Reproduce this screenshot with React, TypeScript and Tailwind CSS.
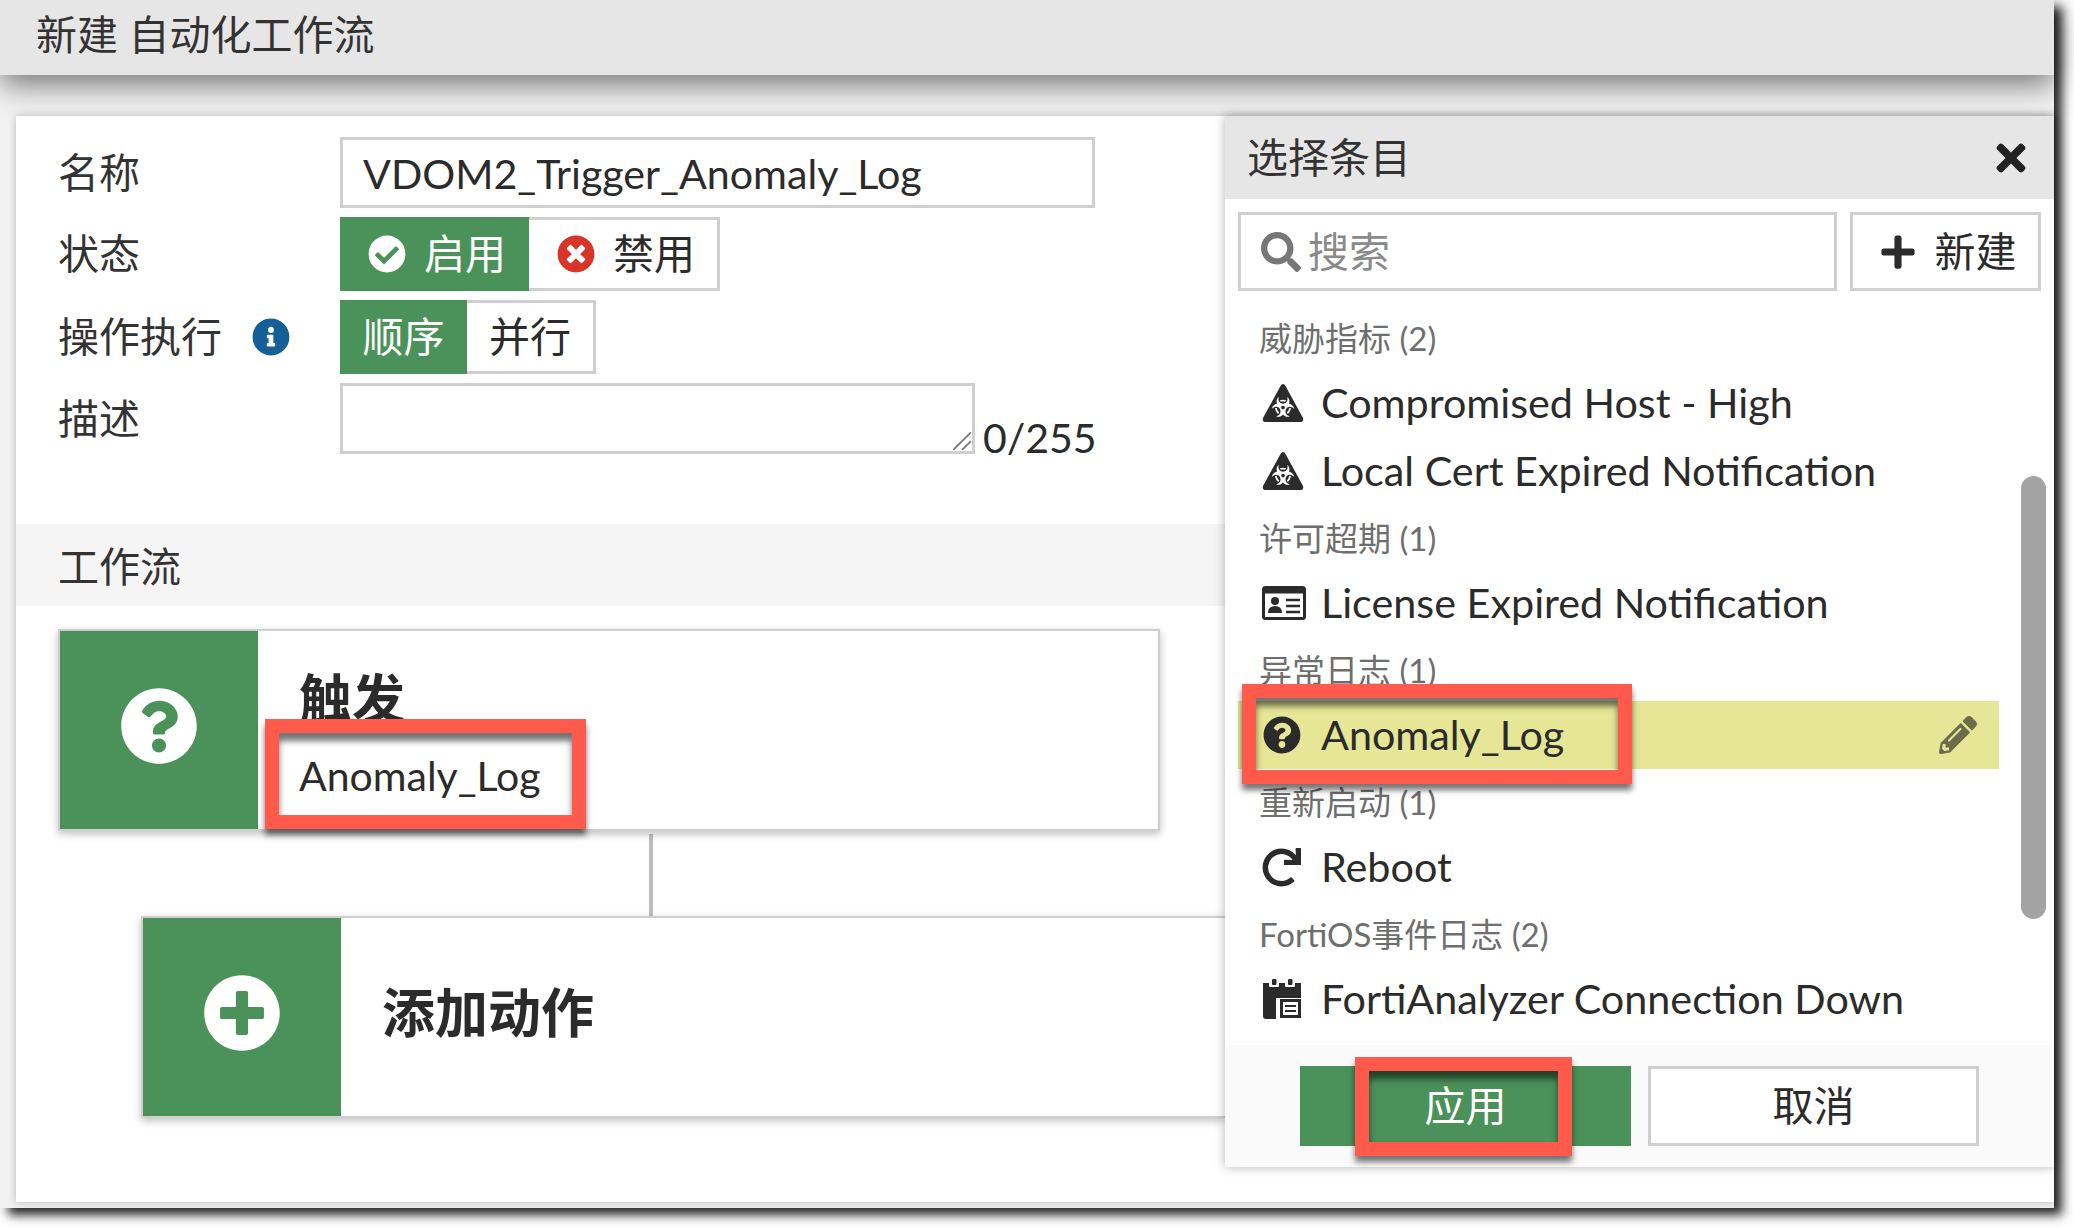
import React from "react";
import {
  FaCheckCircle,
  FaTimesCircle,
  FaInfoCircle,
  FaQuestionCircle,
  FaPlusCircle,
  FaSearch,
  FaPlus,
  FaTimes,
  FaRedo,
  FaPencilAlt,
  FaBiohazard,
} from "react-icons/fa";

const font = "font-['Lato','Noto_Sans_CJK_SC',sans-serif]";

function Hazard() {
  return (
    <span className="relative w-[42px] h-[40px] block">
      <svg viewBox="0 0 42 40" className="w-[42px] h-[40px]">
        <path d="M21 1 Q22.5 1 23.5 3 L41 35 Q42 39 38 39 L4 39 Q0 39 1 35 L18.5 3 Q19.5 1 21 1 Z" fill="#2b2b2b" />
      </svg>
      <FaBiohazard className="absolute left-[10px] top-[13px] text-[22px] text-white" />
    </span>
  );
}

function IdCard() {
  return (
    <svg viewBox="0 0 44 34" className="w-[44px] h-[34px]">
      <rect x="1.5" y="1.5" width="41" height="31" rx="2" fill="#fff" stroke="#2b2b2b" strokeWidth="3" />
      <rect x="1.5" y="1.5" width="41" height="6" fill="#2b2b2b" />
      <circle cx="13" cy="15" r="4" fill="#2b2b2b" />
      <path d="M6 27 q0 -7 7 -7 q7 0 7 7 Z" fill="#2b2b2b" />
      <path d="M24 14 H38 M24 20 H38 M24 26 H38" stroke="#2b2b2b" strokeWidth="2.4" />
    </svg>
  );
}

function Calendar() {
  return (
    <svg viewBox="0 0 40 40" className="w-[40px] h-[40px]">
      <path d="M1 4 H39 V19 H14 V40 H4 Q1 40 1 37 Z" fill="#2b2b2b" />
      <rect x="7" y="1" width="10" height="7" rx="1" fill="#fff" />
      <rect x="23" y="1" width="10" height="7" rx="1" fill="#fff" />
      <rect x="10" y="0" width="4.5" height="6" rx="1" fill="#2b2b2b" />
      <rect x="26" y="0" width="4.5" height="6" rx="1" fill="#2b2b2b" />
      <rect x="18" y="20" width="21" height="19" fill="#2b2b2b" />
      <rect x="21" y="23" width="15" height="13" fill="#fff" />
      <path d="M23 27 H34 M23 32 H34" stroke="#2b2b2b" strokeWidth="2" />
    </svg>
  );
}

function Group({ children }: { children: React.ReactNode }) {
  return <div className="h-[64px] pt-[4px] flex items-center pl-[34px] text-[33px] text-[#6e6e6e]">{children}</div>;
}

function Item({ icon, children }: { icon: React.ReactNode; children: React.ReactNode }) {
  return (
    <div className="h-[68px] flex items-center pl-[34px] text-[41.3px] text-[#2b2b2b]">
      <span className="w-[62px] pl-[3px] flex items-center">{icon}</span>
      {children}
    </div>
  );
}

function Callout({ className }: { className: string }) {
  return (
    <div className={`absolute border-[14px] border-[#ff5a4b] shadow-[0_6px_6px_rgba(0,0,0,0.55),inset_0_8px_6px_rgba(0,0,0,0.55)] ${className}`} />
  );
}

function Row({ label, children, className }: { label: React.ReactNode; children: React.ReactNode; className?: string }) {
  return (
    <div className={`flex items-center ${className ?? ""}`}>
      <div className="w-[324px] pl-[42px] flex items-center text-[41px] text-[#333]">{label}</div>
      {children}
    </div>
  );
}

export default function App() {
  return (
    <div className={`${font} w-[2074px] h-[1228px] bg-white overflow-hidden`}>
      <div className="w-[2054px] h-[1208px] bg-[#f2f2f2] shadow-[8px_7px_10px_rgba(0,0,0,0.85)] flex flex-col">
        <div className="h-[75px] shrink-0 bg-[#e6e6e6] flex items-center pl-[36px] text-[41px] text-[#333] shadow-[0_10px_30px_rgba(0,0,0,0.5)] pb-[6px]">
          新建 自动化工作流
        </div>
        <div className="mt-[41px] ml-[16px] h-[1086px] bg-white shadow-[0_0_8px_rgba(0,0,0,0.25)] flex items-start">
          <div className="w-[1209px] shrink-0 flex flex-col">
            <div className="pt-[21px] flex flex-col gap-[9px]">
              <Row label="名称">
                <div className="w-[755px] h-[71px] border-[3px] border-[#cfcfcf] flex items-center pl-[20px] pt-[2px] text-[41.2px] text-[#2b2b2b]">
                  VDOM2_Trigger_Anomaly_Log
                </div>
              </Row>
              <Row label="状态">
                <div className="flex h-[74px] text-[41px]">
                  <div className="w-[189px] bg-[#4a9259] text-white flex items-center pl-[28px] gap-[18px]">
                    <FaCheckCircle className="text-[38px]" />
                    启用
                  </div>
                  <div className="w-[191px] border-[3px] border-l-0 border-[#cfcfcf] text-[#2b2b2b] flex items-center pl-[28px] gap-[18px]">
                    <FaTimesCircle className="text-[38px] text-[#d73527]" />
                    禁用
                  </div>
                </div>
              </Row>
              <Row
                label={
                  <>
                    操作执行
                    <FaInfoCircle className="ml-[30px] text-[38px] text-[#135f96]" />
                  </>
                }
              >
                <div className="flex h-[74px] text-[41px]">
                  <div className="w-[127px] bg-[#4a9259] text-white flex items-center justify-center">顺序</div>
                  <div className="w-[129px] border-[3px] border-l-0 border-[#cfcfcf] text-[#2b2b2b] flex items-center justify-center">并行</div>
                </div>
              </Row>
              <Row label={<span className="h-[71px] flex items-center">描述</span>} className="items-start">
                <div className="flex items-end">
                  <div className="relative w-[635px] h-[71px] border-[3px] border-[#cfcfcf]">
                    <svg viewBox="0 0 20 20" className="absolute right-0 bottom-0 w-[22px] h-[22px]">
                      <path d="M3 19 L19 3 M11 19 L19 11" stroke="#777" strokeWidth="1.6" />
                    </svg>
                  </div>
                  <div className="ml-[8px] text-[41px] leading-[48px] mb-[-8px] text-[#2b2b2b]">0/255</div>
                </div>
              </Row>
            </div>
            <div className="mt-[70px] h-[82px] bg-[#f5f5f5] flex items-center pl-[42px] pt-[3px] text-[41px] text-[#333]">工作流</div>
            <div className="pt-[23px] relative">
              <div className="ml-[42px] w-[1102px] h-[202px] border-[2px] border-[#cfcfcf] shadow-[0_3px_8px_rgba(0,0,0,0.25)] flex relative">
                <div className="w-[198px] bg-[#4a9259] flex items-center justify-center pb-[8px]">
                  <FaQuestionCircle className="text-[78px] text-white" />
                </div>
                <div className="pl-[41px] flex flex-col">
                  <div className="mt-[33px] text-[53px] font-bold leading-[70px] text-[#2b2b2b]">触发</div>
                  <div className="mt-[17px] text-[41px] leading-[50px] text-[#2b2b2b]">Anomaly_Log</div>
                </div>
                <Callout className="left-[205px] top-[88px] w-[321px] h-[110px]" />
              </div>
              <div className="ml-[633px] w-[4px] h-[82px] bg-[#bdbdbd] mt-[3px]" />
              <div className="ml-[125px] h-[202px] border-[2px] border-r-0 border-[#cfcfcf] shadow-[0_3px_8px_rgba(0,0,0,0.25)] flex">
                <div className="w-[198px] bg-[#4a9259] flex items-center justify-center pb-[8px]">
                  <FaPlusCircle className="text-[78px] text-white" />
                </div>
                <div className="pl-[41px] flex items-center text-[53px] font-bold text-[#2b2b2b] pb-[8px]">添加动作</div>
              </div>
            </div>
          </div>
          <div className="w-[829px] h-[1051px] shrink-0 bg-white shadow-[0_0_10px_rgba(0,0,0,0.3)] flex flex-col relative">
            <div className="h-[83px] bg-[#e6e6e6] flex items-center justify-between pl-[22px] pr-[22px] text-[41px] text-[#333]">
              选择条目
              <FaTimes className="text-[42px] text-[#222]" />
            </div>
            <div className="mt-[13px] ml-[13px] flex gap-[13px]">
              <div className="w-[599px] h-[79px] border-[3px] border-[#cfcfcf] flex items-center pl-[20px] gap-[7px] text-[41px] text-[#8a8a8a]">
                <FaSearch className="text-[40px] text-[#777]" />
                搜索
              </div>
              <div className="w-[191px] h-[79px] border-[3px] border-[#cfcfcf] flex items-center justify-center gap-[18px] pl-[4px] text-[41px] text-[#2b2b2b]">
                <FaPlus className="text-[38px]" />
                新建
              </div>
            </div>
            <div className="mt-[14px] flex-1 relative pr-[55px]">
              <Group>威胁指标 (2)</Group>
              <Item icon={<Hazard />}>Compromised Host - High</Item>
              <Item icon={<Hazard />}>Local Cert Expired Notification</Item>
              <Group>许可超期 (1)</Group>
              <Item icon={<IdCard />}>License Expired Notification</Item>
              <Group>异常日志 (1)</Group>
              <div className="ml-[13px] h-[68px] bg-[#e5e696] flex items-center pl-[21px] pr-[22px] text-[41.3px] text-[#2b2b2b]">
                <span className="w-[62px] pl-[4px] flex items-center">
                  <FaQuestionCircle className="text-[38px]" />
                </span>
                <span className="flex-1">Anomaly_Log</span>
                <FaPencilAlt className="text-[38px] text-[#6d6c4a]" />
              </div>
              <Group>重新启动 (1)</Group>
              <Item icon={<FaRedo className="text-[39px]" />}>Reboot</Item>
              <Group>FortiOS事件日志 (2)</Group>
              <Item icon={<Calendar />}>FortiAnalyzer Connection Down</Item>
              <div className="absolute right-[8px] top-[171px] w-[25px] h-[443px] rounded-full bg-[#a3a3a3]" />
            </div>
            <div className="h-[122px] shrink-0 bg-[#fafafa] flex items-start pt-[21px] pl-[75px] gap-[17px] text-[41px]">
              <div className="w-[331px] h-[80px] bg-[#4a9259] text-white flex items-center justify-center">应用</div>
              <div className="w-[331px] h-[80px] bg-white border-[3px] border-[#cfcfcf] text-[#2b2b2b] flex items-center justify-center">取消</div>
            </div>
            <Callout className="left-[17px] top-[568px] w-[390px] h-[100px]" />
            <Callout className="left-[130px] top-[941px] w-[217px] h-[99px]" />
          </div>
        </div>
      </div>
    </div>
  );
}
